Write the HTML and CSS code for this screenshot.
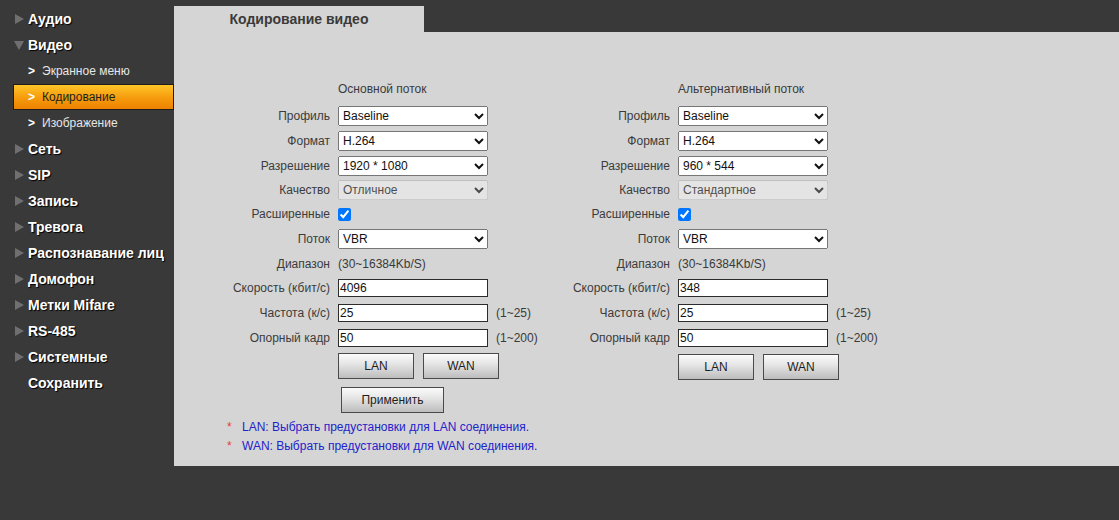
FILE: index.html
```html
<!DOCTYPE html>
<html lang="ru">
<head>
<meta charset="utf-8">
<title>Кодирование видео</title>
<link rel="stylesheet" href="styles.css">
</head>
<body>
<div class="app">
  <nav class="sidebar">
    <div class="nav-item"><span class="tri"></span>Аудио</div>
    <div class="nav-item"><span class="tri down"></span>Видео</div>
    <div class="nav-sub"><span class="chev">&gt;</span>Экранное меню</div>
    <div class="nav-sub active"><span class="chev">&gt;</span>Кодирование</div>
    <div class="nav-sub"><span class="chev">&gt;</span>Изображение</div>
    <div class="nav-item"><span class="tri"></span>Сеть</div>
    <div class="nav-item"><span class="tri"></span>SIP</div>
    <div class="nav-item"><span class="tri"></span>Запись</div>
    <div class="nav-item"><span class="tri"></span>Тревога</div>
    <div class="nav-item"><span class="tri"></span>Распознавание лиц</div>
    <div class="nav-item"><span class="tri"></span>Домофон</div>
    <div class="nav-item"><span class="tri"></span>Метки Mifare</div>
    <div class="nav-item"><span class="tri"></span>RS-485</div>
    <div class="nav-item"><span class="tri"></span>Системные</div>
    <div class="nav-item"><span class="tri none"></span>Сохранить</div>
  </nav>
  <main class="main">
    <div class="tabs"><div class="tab">Кодирование видео</div></div>
    <section class="panel">
      <div class="columns">
        <div class="col">
          <div class="col-head">Основной поток</div>
          <div class="row"><label class="lbl">Профиль</label><select class="ctl"><option>Baseline</option></select></div>
          <div class="row"><label class="lbl">Формат</label><select class="ctl"><option>H.264</option></select></div>
          <div class="row"><label class="lbl">Разрешение</label><select class="ctl"><option>1920 * 1080</option></select></div>
          <div class="row r24"><label class="lbl">Качество</label><select class="ctl" disabled><option>Отличное</option></select></div>
          <div class="row r24"><label class="lbl">Расширенные</label><input type="checkbox" class="chk" checked></div>
          <div class="row"><label class="lbl">Поток</label><select class="ctl"><option>VBR</option></select></div>
          <div class="row"><label class="lbl">Диапазон</label><span class="val">(30~16384Kb/S)</span></div>
          <div class="row r24"><label class="lbl">Скорость (кбит/с)</label><input type="text" class="txt" value="4096"></div>
          <div class="row"><label class="lbl">Частота (к/с)</label><input type="text" class="txt" value="25"><span class="hint">(1~25)</span></div>
          <div class="row"><label class="lbl">Опорный кадр</label><input type="text" class="txt" value="50"><span class="hint">(1~200)</span></div>
          <div class="btn-row"><button class="btn">LAN</button><button class="btn">WAN</button></div>
          <div class="apply-row"><button class="btn apply">Применить</button></div>
        </div>
        <div class="col">
          <div class="col-head">Альтернативный поток</div>
          <div class="row"><label class="lbl">Профиль</label><select class="ctl"><option>Baseline</option></select></div>
          <div class="row"><label class="lbl">Формат</label><select class="ctl"><option>H.264</option></select></div>
          <div class="row"><label class="lbl">Разрешение</label><select class="ctl"><option>960 * 544</option></select></div>
          <div class="row r24"><label class="lbl">Качество</label><select class="ctl" disabled><option>Стандартное</option></select></div>
          <div class="row r24"><label class="lbl">Расширенные</label><input type="checkbox" class="chk" checked></div>
          <div class="row"><label class="lbl">Поток</label><select class="ctl"><option>VBR</option></select></div>
          <div class="row"><label class="lbl">Диапазон</label><span class="val">(30~16384Kb/S)</span></div>
          <div class="row r24"><label class="lbl">Скорость (кбит/с)</label><input type="text" class="txt" value="348"></div>
          <div class="row"><label class="lbl">Частота (к/с)</label><input type="text" class="txt" value="25"><span class="hint">(1~25)</span></div>
          <div class="row"><label class="lbl">Опорный кадр</label><input type="text" class="txt" value="50"><span class="hint">(1~200)</span></div>
          <div class="btn-row alt"><button class="btn">LAN</button><button class="btn">WAN</button></div>
        </div>
      </div>
      <ul class="notes">
        <li><span class="star">*</span>LAN: Выбрать предустановки для LAN соединения.</li>
        <li><span class="star">*</span>WAN: Выбрать предустановки для WAN соединения.</li>
      </ul>
    </section>
  </main>
</div>
</body>
</html>
```
FILE: styles.css
```css
html, body {
  margin: 0;
  padding: 0;
}
body {
  background: #393939;
  font-family: "Liberation Sans", Arial, sans-serif;
  font-size: 12px;
  color: #3a3a3a;
  width: 1119px;
  height: 520px;
  overflow: hidden;
}
.app {
  display: flex;
  align-items: flex-start;
}

/* Sidebar */
.sidebar {
  width: 174px;
  flex: none;
  padding-top: 6px;
}
.nav-item {
  height: 26px;
  display: flex;
  align-items: center;
  color: #fff;
  font-weight: bold;
  font-size: 14px;
  text-shadow: 1px 1px 1px #000;
}
.tri {
  width: 0;
  height: 0;
  margin-left: 15px;
  margin-right: 4px;
  border-top: 5px solid transparent;
  border-bottom: 5px solid transparent;
  border-left: 9px solid #6f6f6f;
}
.tri.down {
  margin-left: 14px;
  margin-right: 4px;
  border-left: 5px solid transparent;
  border-right: 5px solid transparent;
  border-top: 9px solid #6f6f6f;
  border-bottom: 0;
}
.tri.none {
  border-left-color: transparent;
}
.nav-sub {
  height: 26px;
  display: flex;
  align-items: center;
  color: #e6e6e6;
  font-size: 12px;
  box-sizing: border-box;
}
.chev {
  width: 14px;
  margin-left: 28px;
  color: #fff;
  font-weight: bold;
  font-size: 12px;
}
.nav-sub.active {
  margin-left: 13px;
  width: 161px;
  border: 1px solid #1d1d1d;
  background: linear-gradient(#ffc528, #f59a0c 55%, #ee8200);
  color: #1f1f1f;
}
.nav-sub.active .chev {
  margin-left: 14px;
}

/* Main */
.main {
  flex: 1;
  padding-top: 6px;
}
.tabs {
  display: flex;
}
.tab {
  width: 250px;
  height: 26px;
  line-height: 26px;
  background: #d5d5d5;
  text-align: center;
  font-weight: bold;
  font-size: 14px;
  color: #3a3a3a;
}
.panel {
  background: #d5d5d5;
  height: 434px;
  box-sizing: border-box;
  padding: 49px 0 0 36px;
}
.columns {
  display: flex;
}
.col {
  width: 340px;
}
.col-head {
  margin-left: 128px;
  height: 22px;
  line-height: 16px;
  color: #3a3a3a;
}
.row {
  height: 25px;
  display: flex;
  align-items: center;
}
.row.r24 {
  height: 24px;
}
.lbl {
  width: 120px;
  margin-right: 8px;
  text-align: right;
  color: #3c3c3c;
  white-space: nowrap;
}
.ctl {
  width: 150px;
  height: 20px;
  margin: 0;
  font-family: "Liberation Sans", Arial, sans-serif;
  font-size: 12px;
  color: #111;
}
.chk {
  margin: 0;
  width: 13px;
  height: 13px;
}
.val {
  color: #3a3a3a;
}
.txt {
  width: 150px;
  height: 18px;
  box-sizing: border-box;
  margin: 0;
  padding: 0 1px;
  border: 1px solid #2c2c2c;
  background: #fff;
  font-family: "Liberation Sans", Arial, sans-serif;
  font-size: 12px;
  color: #111;
  outline: none;
}
.hint {
  margin-left: 8px;
  color: #3a3a3a;
}
.btn-row {
  margin-top: 3px;
  margin-left: 128px;
  display: flex;
  gap: 9px;
}
.btn-row.alt {
  margin-top: 4px;
}
.btn {
  width: 76px;
  height: 26px;
  margin: 0;
  padding: 0;
  border: 1px solid #4a4a4a;
  border-radius: 0;
  background: linear-gradient(#fbfbfb, #e6e6e6 40%, #bdbdbd);
  font-family: "Liberation Sans", Arial, sans-serif;
  font-size: 12px;
  color: #1e1e1e;
}
.apply-row {
  margin-top: 8px;
  margin-left: 131px;
}
.btn.apply {
  width: 103px;
}
.notes {
  list-style: none;
  margin: 5px 0 0 17px;
  padding: 0;
  color: #2323cc;
}
.notes li {
  height: 19px;
  line-height: 19px;
}
.star {
  display: inline-block;
  width: 15px;
  color: #e83a3a;
}
```
